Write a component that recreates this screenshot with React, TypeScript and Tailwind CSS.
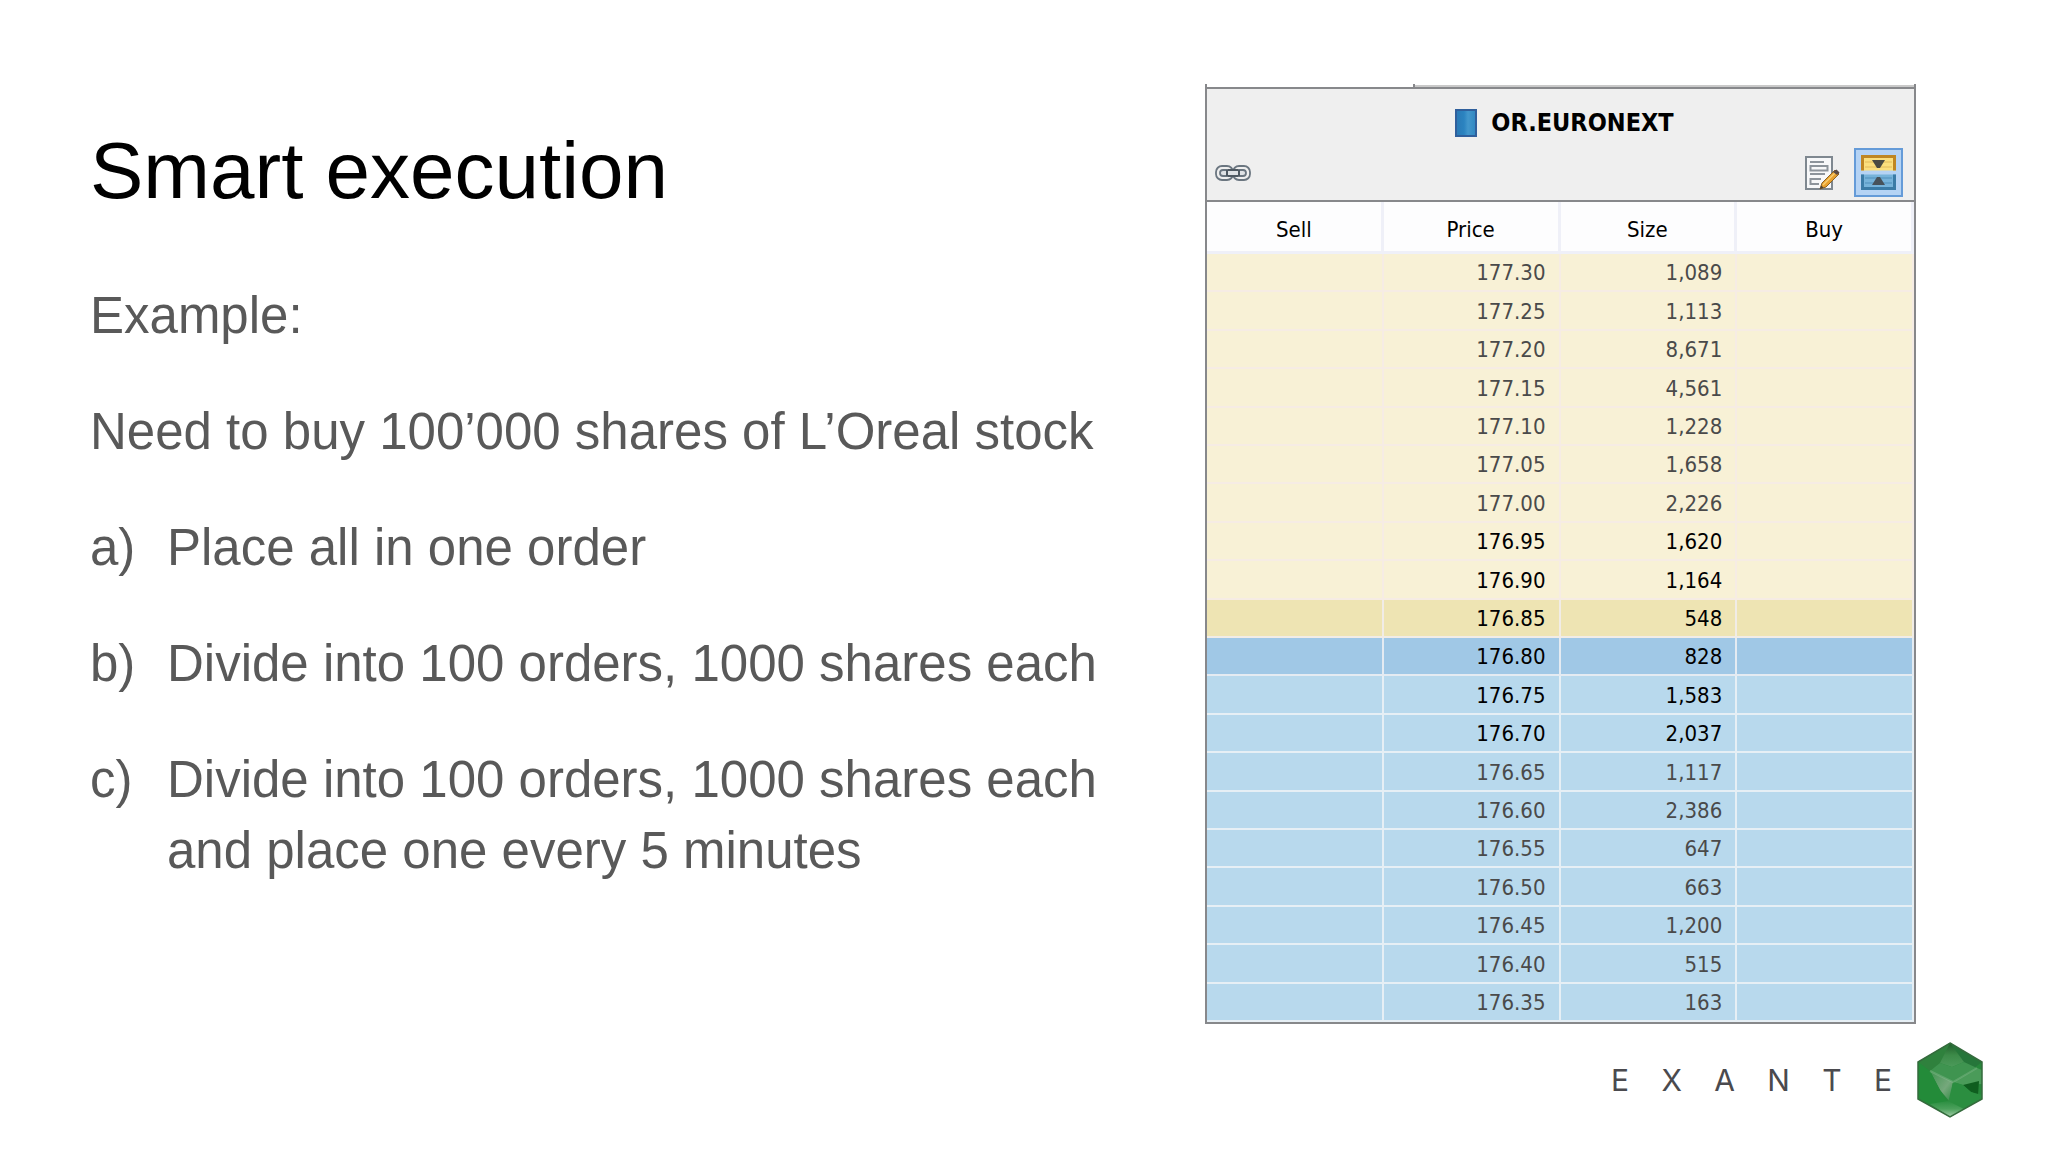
import React from 'react';

type Tone = 'ask' | 'bestAsk' | 'bestBid' | 'bid';

interface Quote {
  price: string;
  size: string;
  tone: Tone;
  faded?: boolean;
}

const quotes: Quote[] = [
  { price: '177.30', size: '1,089', tone: 'ask', faded: true },
  { price: '177.25', size: '1,113', tone: 'ask', faded: true },
  { price: '177.20', size: '8,671', tone: 'ask', faded: true },
  { price: '177.15', size: '4,561', tone: 'ask', faded: true },
  { price: '177.10', size: '1,228', tone: 'ask', faded: true },
  { price: '177.05', size: '1,658', tone: 'ask', faded: true },
  { price: '177.00', size: '2,226', tone: 'ask', faded: true },
  { price: '176.95', size: '1,620', tone: 'ask' },
  { price: '176.90', size: '1,164', tone: 'ask' },
  { price: '176.85', size: '548', tone: 'bestAsk' },
  { price: '176.80', size: '828', tone: 'bestBid' },
  { price: '176.75', size: '1,583', tone: 'bid' },
  { price: '176.70', size: '2,037', tone: 'bid' },
  { price: '176.65', size: '1,117', tone: 'bid', faded: true },
  { price: '176.60', size: '2,386', tone: 'bid', faded: true },
  { price: '176.55', size: '647', tone: 'bid', faded: true },
  { price: '176.50', size: '663', tone: 'bid', faded: true },
  { price: '176.45', size: '1,200', tone: 'bid', faded: true },
  { price: '176.40', size: '515', tone: 'bid', faded: true },
  { price: '176.35', size: '163', tone: 'bid', faded: true },
];

const toneClass: Record<Tone, string> = {
  ask: 'bg-[#f8f1d6] border-[#f6ece4]',
  bestAsk: 'bg-[#eee4b3] border-[#f1ece6]',
  bestBid: 'bg-[#a0c8e6] border-[#e4ebf2]',
  bid: 'bg-[#b8d9ed] border-[#e6eff5]',
};

const options = [
  { mark: 'a)', text: 'Place all in one order' },
  { mark: 'b)', text: 'Divide into 100 orders, 1000 shares each' },
  { mark: 'c)', text: 'Divide into 100 orders, 1000 shares each and place one every 5 minutes' },
];

const BookIcon: React.FC = () => (
  <svg width="22" height="28" viewBox="0 0 22 28" aria-hidden="true">
    <defs>
      <linearGradient id="book" x1="0" x2="1" y1="0" y2="0">
        <stop offset="0" stopColor="#2a79b5" />
        <stop offset="0.4" stopColor="#2b83c0" />
        <stop offset="0.6" stopColor="#4397cc" />
        <stop offset="1" stopColor="#2f86c0" />
      </linearGradient>
    </defs>
    <rect x="1" y="1" width="20" height="26" fill="url(#book)" stroke="#2f5f9c" strokeWidth="2" />
  </svg>
);

const ChainIcon: React.FC = () => (
  <svg width="36" height="16" viewBox="0 0 36 16" fill="none" aria-hidden="true">
    <g stroke="#6b7680" strokeWidth="1.8">
      <rect x="1" y="1" width="17" height="14" rx="6" />
      <rect x="18" y="1" width="17" height="14" rx="6" />
    </g>
    <rect x="5" y="5" width="26" height="6" rx="3" fill="#dfe2e5" stroke="#6b7680" strokeWidth="1.8" />
    <path d="M12 5v6M24 5v6" stroke="#4f5962" strokeWidth="2" />
    <path d="M13 5h10M13 11h10" stroke="#4f5962" strokeWidth="2" />
  </svg>
);

const NotesIcon: React.FC = () => (
  <svg width="36" height="36" viewBox="0 0 36 36" fill="none" aria-hidden="true">
    <rect x="2" y="2" width="26" height="32" fill="#f7f8f9" stroke="#7f8890" strokeWidth="2" />
    <g stroke="#8d949b" strokeWidth="2">
      <path d="M6 7h14M6 19h15" />
      <rect x="6.500" y="11" width="17" height="4.500" />
      <path d="M17 24H6.500v5H15" />
    </g>
    <path d="M16 34l2-6 13-13 4 4-13 13z" fill="#e9a02c" stroke="#8a6326" strokeWidth="1" />
    <path d="M19 30l12-12" stroke="#f8cf73" strokeWidth="1.500" />
    <path d="M29 17l3.500-2.500 3 3L33 20z" fill="#5b4b45" />
    <path d="M16 34l1.200-3.500 2.500 2.300z" fill="#4b4036" />
  </svg>
);

const SpreadIcon: React.FC = () => (
  <svg width="35" height="35" viewBox="0 0 35 35" fill="none" aria-hidden="true">
    <path d="M0 0h35v15.500H0z" fill="#fbdf7d" />
    <path d="M4 7h27M4 12h27" stroke="#e2bb5c" strokeWidth="1" />
    <path d="M1.500 15.500V1.500h32v14" stroke="#bf8622" strokeWidth="3" />
    <path d="M11 5h13l-5 8h-3z" fill="#4a4a42" />
    <path d="M0 19.500h35V35H0z" fill="#76b3da" />
    <path d="M4 23h27M4 28h27" stroke="#4e8fbb" strokeWidth="1" />
    <path d="M1.500 19.500v14h32v-14" stroke="#3a7ba6" strokeWidth="3" />
    <path d="M11 30h13l-5-8h-3z" fill="#47525a" />
  </svg>
);

const Gem: React.FC = () => (
  <svg width="68" height="76" viewBox="0 0 68 76" aria-hidden="true">
    <defs>
      <linearGradient id="gemGlow" x1="0" x2="1" y1="0" y2="1">
        <stop offset="0" stopColor="#3f9350" />
        <stop offset="0.6" stopColor="#76a87c" />
        <stop offset="1" stopColor="#2c8a40" />
      </linearGradient>
      <linearGradient id="gemFoot" x1="0" x2="0" y1="0" y2="1">
        <stop offset="0" stopColor="#2b8e40" />
        <stop offset="0.5" stopColor="#4ca15c" />
        <stop offset="1" stopColor="#a5cdab" />
      </linearGradient>
      <linearGradient id="gemTop" x1="0" x2="0" y1="0" y2="1">
        <stop offset="0" stopColor="#1f5c2a" />
        <stop offset="0.5" stopColor="#3c8a48" />
        <stop offset="1" stopColor="#4c9a5a" />
      </linearGradient>
    </defs>
    <path d="M34 1l32 19v37L34 75 2 57V20z" fill="#27873b" />
    <path d="M34 1L2 20l12 9 18-11z" fill="#2f813d" />
    <path d="M34 1l32 19-8 6-16-8z" fill="#26763a" />
    <path d="M34 1l-10 20 12 4 12-5z" fill="url(#gemTop)" />
    <path d="M14 29l10-8 12 4 12-5 13 6-24 14z" fill="#3f9450" />
    <path d="M14 29l23 11-3 20-10-12z" fill="url(#gemGlow)" />
    <path d="M2 20l12 9 10 19 8 13-10 7L2 57z" fill="#238b39" />
    <path d="M37 40l24-14 5 2v14l-19 1z" fill="#4a9b59" />
    <path d="M47 43l16-4-1 14-7-3z" fill="#0f5e1f" />
    <path d="M37 40l10 3 8 7 11 3v4L48 67 32 61z" fill="#2b8e40" />
    <path d="M14 62l18-3 16 8-14 8z" fill="url(#gemFoot)" />
    <path d="M14 29l23 11 24-14" fill="none" stroke="#8dbd94" strokeWidth="2" opacity="0.4" />
    <path d="M34 1l32 19v37L34 75 2 57V20z" fill="none" stroke="#356b3d" strokeWidth="1.5" />
  </svg>
);

const OrderBook: React.FC = () => (
  <section className="border-x-2 border-b-2 border-[#87888b] bg-[#efefef] font-['DejaVu_Sans_Condensed','DejaVu_Sans',sans-serif] text-[22px] text-black">
    <div className="flex h-[3px] bg-white">
      <div className="w-[208px] border-r-2 border-[#87888b]" />
      <div className="flex-1 border-b-2 border-[#c9c9c9]" />
    </div>
    <header className="border-y-2 border-[#87888b]">
      <div className="flex h-[59px] items-center justify-center gap-[14px] pt-2 pl-2">
        <BookIcon />
        <h2 className="text-[25px] leading-7 font-bold">OR.EURONEXT</h2>
      </div>
      <div className="flex h-[52px] items-center justify-between pr-[11px] pb-[3px] pl-2">
        <button type="button" aria-label="Link instrument">
          <ChainIcon />
        </button>
        <div className="flex items-center gap-[14px]">
          <button type="button" aria-label="Edit order">
            <NotesIcon />
          </button>
          <button
            type="button"
            aria-label="Center on spread"
            className="flex size-[49px] items-center justify-center border-2 border-[#659bd8] bg-[#b5d3f4]"
          >
            <SpreadIcon />
          </button>
        </div>
      </div>
    </header>
    <table className="w-full table-fixed border-separate border-spacing-0">
      <thead>
        <tr className="h-[52px] bg-[#fdfdfe]">
          {['Sell', 'Price', 'Size', 'Buy'].map((name) => (
            <th key={name} scope="col" className="border-r-3 border-b-3 border-[#eff0f8] px-0 pt-[6px] pb-0 font-normal">
              {name}
            </th>
          ))}
        </tr>
      </thead>
      <tbody>
        {quotes.map((q) => (
          <tr
            key={q.price}
            className={`h-[38px] text-right leading-7 nth-[5n+2]:h-[39px] nth-[5n+4]:h-[39px] ${
              q.faded ? 'text-[#4a4a4a]' : 'text-black'
            }`}
          >
            <td className={`border-r-2 border-b-2 p-0 ${toneClass[q.tone]}`} />
            <td className={`border-r-2 border-b-2 pt-[2px] pr-[13px] pb-0 pl-0 ${toneClass[q.tone]}`}>{q.price}</td>
            <td className={`border-r-2 border-b-2 pt-[2px] pr-[13px] pb-0 pl-0 ${toneClass[q.tone]}`}>{q.size}</td>
            <td className={`border-r-2 border-b-2 p-0 ${toneClass[q.tone]}`} />
          </tr>
        ))}
      </tbody>
    </table>
  </section>
);

const App: React.FC = () => {
  return (
    <main className="min-h-screen bg-white font-['Liberation_Sans',Arial,sans-serif]">
      <div className="grid grid-cols-[1fr_711px] gap-[72px] pt-[84px] pr-[132px] pl-[90px]">
        <div className="pt-[41px]">
          <h1 className="text-[80px] leading-[92px] text-black">Smart execution</h1>
          <div className="mt-[63px] flex flex-col gap-[45px] text-[51px] leading-[71px] text-[#595959]">
            <p>Example:</p>
            <p className="whitespace-nowrap">Need to buy 100’000 shares of L’Oreal stock</p>
            <ol className="flex flex-col gap-[45px]">
              {options.map((o) => (
                <li key={o.mark} className="flex">
                  <span className="w-[77px] shrink-0">{o.mark}</span>
                  <span>{o.text}</span>
                </li>
              ))}
            </ol>
          </div>
        </div>
        <OrderBook />
      </div>
      <footer className="flex items-center justify-end gap-[24px] pt-[18px] pr-[64px]">
        <div className="flex w-[281px] justify-between font-[Inter,sans-serif] text-[30px] leading-9 text-[#4a4a4e]">
          {'EXANTE'.split('').map((letter, i) => (
            <span key={i}>{letter}</span>
          ))}
        </div>
        <Gem />
      </footer>
    </main>
  );
};

export default App;
